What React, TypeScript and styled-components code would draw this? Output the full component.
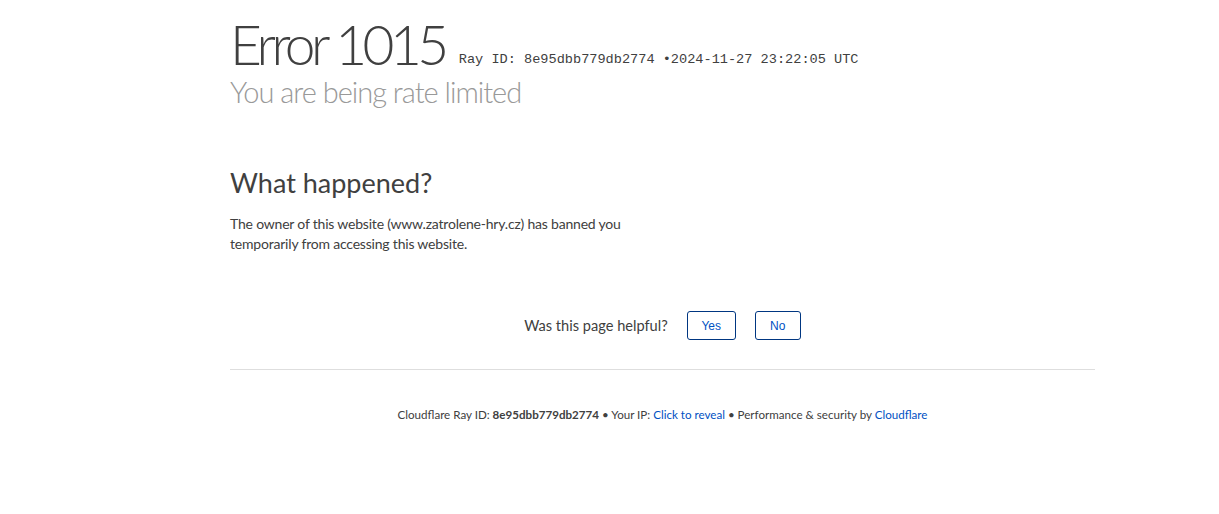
import styled, { createGlobalStyle } from 'styled-components';

const GlobalStyle = createGlobalStyle`
  html, body {
    margin: 0;
    padding: 0;
    background: #fff;
  }
  body {
    font-family: Lato, "Noto Sans", sans-serif;
    color: #404040;
  }
`;

const Page = styled.div`
  width: 865px;
  margin-left: 230px;
  padding-top: 14px;
`;

const Header = styled.header`
  display: flex;
  flex-direction: column;
`;

const TitleRow = styled.div`
  display: flex;
  align-items: baseline;
  gap: 14px;
`;

const Title = styled.h1`
  margin: 0;
  font-size: 55px;
  font-weight: 300;
  letter-spacing: -4.5px;
  line-height: 60px;
  color: #404040;
`;

const RayStamp = styled.span`
  position: relative;
  top: -2px;
  font-family: "Liberation Mono", "Courier New", monospace;
  font-size: 13.6px;
  color: #404040;
`;

const Subtitle = styled.h2`
  margin: 0;
  font-size: 29px;
  font-weight: 300;
  letter-spacing: -1px;
  line-height: 36px;
  color: #999;
`;

const Section = styled.section`
  margin-top: 56px;
  width: 400px;
`;

const SectionTitle = styled.h2`
  margin: 0 0 14px;
  font-size: 27px;
  font-weight: 400;
  line-height: 34px;
  color: #404040;
`;

const Body = styled.p`
  margin: 0;
  font-size: 14px;
  letter-spacing: -0.2px;
  line-height: 20px;
  color: #404040;
`;

const Feedback = styled.div`
  margin-top: 57px;
  display: flex;
  justify-content: center;
  align-items: center;
  gap: 19px;
  padding-bottom: 29px;
  border-bottom: 1px solid #dedede;
`;

const Question = styled.span`
  font-size: 14.6px;
  color: #404040;
`;

const Buttons = styled.div`
  display: flex;
  gap: 19px;
`;

const VoteButton = styled.button<{ $w: number }>`
  width: ${p => p.$w}px;
  height: 29px;
  border: 1px solid #003681;
  border-radius: 3px;
  background: #fff;
  color: #0051c3;
  font-family: "Liberation Sans", Arial, sans-serif;
  font-size: 12px;
  padding: 0;
  cursor: pointer;
`;

const Footer = styled.footer`
  margin-top: 38px;
  text-align: center;
  font-size: 11.6px;
  color: #404040;
`;

const Strong = styled.span`
  font-weight: 700;
`;

const Link = styled.a`
  color: #0051c3;
  text-decoration: none;
`;

export default function App() {
  return (
    <>
      <GlobalStyle />
      <Page>
        <Header>
          <TitleRow>
            <Title>Error 1015</Title>
            <RayStamp>Ray ID: 8e95dbb779db2774 •2024-11-27 23:22:05 UTC</RayStamp>
          </TitleRow>
          <Subtitle>You are being rate limited</Subtitle>
        </Header>
        <Section>
          <SectionTitle>What happened?</SectionTitle>
          <Body>
            The owner of this website (www.zatrolene-hry.cz) has banned you temporarily from accessing this website.
          </Body>
        </Section>
        <Feedback>
          <Question>Was this page helpful?</Question>
          <Buttons>
            <VoteButton $w={49}>Yes</VoteButton>
            <VoteButton $w={46}>No</VoteButton>
          </Buttons>
        </Feedback>
        <Footer>
          Cloudflare Ray ID: <Strong>8e95dbb779db2774</Strong> • Your IP: <Link href="#">Click to reveal</Link> • Performance &amp; security by <Link href="#">Cloudflare</Link>
        </Footer>
      </Page>
    </>
  );
}
